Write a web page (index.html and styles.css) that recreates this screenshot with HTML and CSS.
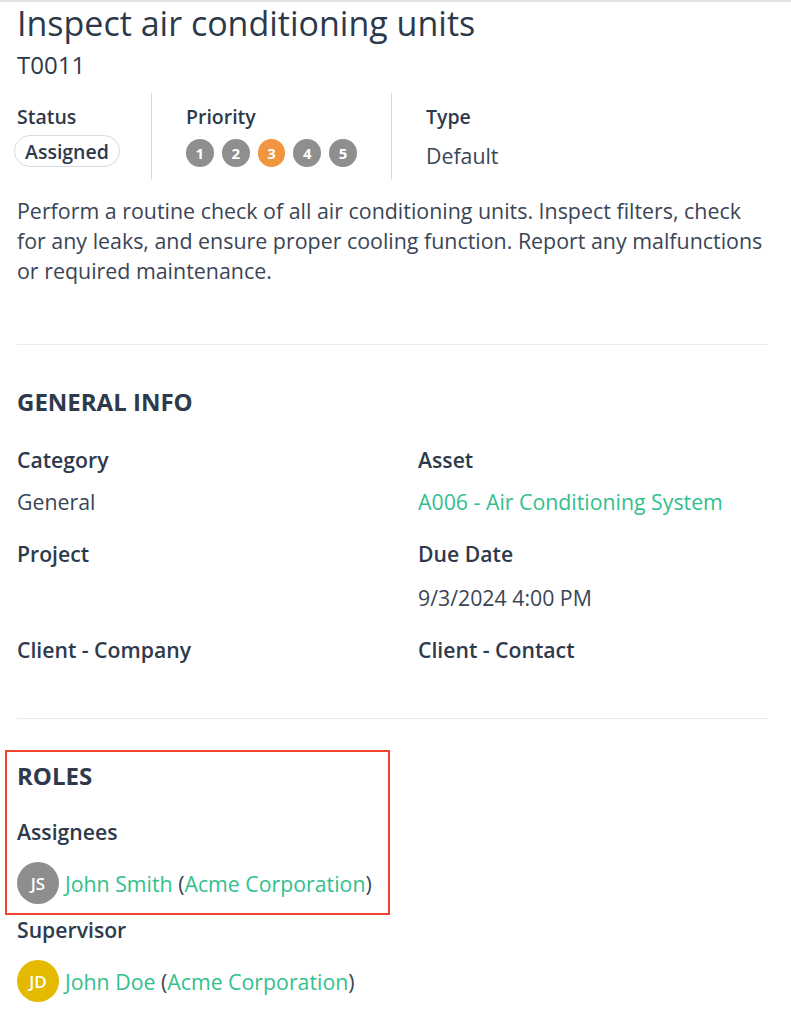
FILE: index.html
```html
<!DOCTYPE html>
<html lang="en">
<head>
<meta charset="utf-8">
<title>Inspect air conditioning units</title>
<link rel="stylesheet" href="styles.css">
</head>
<body>
<div class="page">
  <h1 class="title">Inspect air conditioning units</h1>
  <div class="code">T0011</div>

  <div class="meta">
    <div class="meta-col col-status">
      <div class="meta-label">Status</div>
      <div class="meta-value"><span class="pill">Assigned</span></div>
    </div>
    <div class="meta-col col-priority">
      <div class="meta-label">Priority</div>
      <div class="meta-value priorities">
        <span class="prio">1</span>
        <span class="prio">2</span>
        <span class="prio active">3</span>
        <span class="prio">4</span>
        <span class="prio">5</span>
      </div>
    </div>
    <div class="meta-col col-type">
      <div class="meta-label">Type</div>
      <div class="meta-value text">Default</div>
    </div>
  </div>

  <p class="desc">Perform a routine check of all air conditioning units. Inspect filters, check for any leaks, and ensure proper cooling function. Report any malfunctions or required maintenance.</p>

  <hr class="sep sep-first">

  <h2 class="heading">GENERAL INFO</h2>
  <div class="info-grid">
    <div class="field">
      <div class="label">Category</div>
      <div class="value">General</div>
    </div>
    <div class="field">
      <div class="label">Asset</div>
      <div class="value"><a class="link" href="#">A006 - Air Conditioning System</a></div>
    </div>
    <div class="field">
      <div class="label">Project</div>
      <div class="value"></div>
    </div>
    <div class="field">
      <div class="label">Due Date</div>
      <div class="value date">9/3/2024 4:00 PM</div>
    </div>
    <div class="field">
      <div class="label">Client - Company</div>
      <div class="value"></div>
    </div>
    <div class="field">
      <div class="label">Client - Contact</div>
      <div class="value"></div>
    </div>
  </div>

  <hr class="sep sep-second">

  <div class="highlight">
    <h2 class="heading">ROLES</h2>
    <div class="label role-label">Assignees</div>
    <div class="person">
      <span class="avatar gray">JS</span>
      <span class="person-text"><a class="link" href="#">John Smith</a> (<a class="link" href="#">Acme Corporation</a>)</span>
    </div>
  </div>
  <div class="label sup-label">Supervisor</div>
  <div class="person person-sup">
    <span class="avatar gold">JD</span>
    <span class="person-text"><a class="link" href="#">John Doe</a> (<a class="link" href="#">Acme Corporation</a>)</span>
  </div>
</div>
</body>
</html>
```
FILE: styles.css
```css
html, body {
  margin: 0;
  padding: 0;
  background: #ffffff;
}
body {
  font-family: "Open Sans", "Noto Sans", "Liberation Sans", sans-serif;
  color: #2e3a4b;
  border-top: 2px solid #e3e3e3;
  overflow: hidden;
}
.page {
  padding: 0 23px 0 17px;
}
.title {
  margin: 0;
  font-size: 34px;
  line-height: 42px;
  font-weight: 500;
  color: #2c394a;
}
.code {
  font-size: 24px;
  line-height: 41px;
  color: #2c394a;
}
.meta {
  display: flex;
  margin-top: 8px;
}
.meta-col {
  padding: 11px 34px 13px 34px;
  border-left: 1px solid #dadada;
}
.col-status {
  width: 134px;
  box-sizing: border-box;
  padding-left: 0;
  border-left: 0;
}
.col-priority {
  width: 240px;
  box-sizing: border-box;
}
.meta-label {
  font-size: 19.5px;
  line-height: 26px;
  font-weight: 600;
  color: #2e3a4b;
}
.meta-value {
  margin-top: 5px;
  height: 32px;
  display: flex;
  align-items: center;
}
.meta-value.text {
  font-size: 21.3px;
  color: #3a4556;
  padding-top: 8px;
  box-sizing: border-box;
}
.pill {
  margin-left: -3px;
  height: 32px;
  box-sizing: border-box;
  display: inline-flex;
  align-items: center;
  padding: 0 10px;
  border: 1px solid #d5dbe2;
  border-radius: 16px;
  font-size: 19.5px;
  font-weight: 600;
  color: #2e3a4b;
}
.priorities {
  gap: 8px;
  padding-top: 4px;
  box-sizing: border-box;
}
.prio {
  width: 28px;
  height: 28px;
  border-radius: 50%;
  background: #8f8f8f;
  color: #ffffff;
  font-size: 15px;
  font-weight: 700;
  display: flex;
  align-items: center;
  justify-content: center;
}
.prio.active {
  background: #f09540;
}
.desc {
  margin: 16px 0 0 0;
  font-size: 21.4px;
  line-height: 30px;
  color: #3a4556;
}
.sep {
  border: 0;
  border-top: 1px solid #ececec;
  margin: 0;
}
.sep-first {
  margin-top: 58px;
}
.heading {
  margin: 41px 0 0 0;
  font-size: 24px;
  line-height: 32px;
  font-weight: 700;
  color: #2e3a4b;
}
.info-grid {
  display: grid;
  grid-template-columns: 401px 1fr;
  row-gap: 26px;
  margin-top: 29px;
}
.label {
  font-size: 21.2px;
  line-height: 26px;
  font-weight: 600;
  color: #2e3a4b;
}
.value {
  margin-top: 16px;
  min-height: 26px;
  font-size: 21.3px;
  line-height: 26px;
  color: #3a4556;
}
.value.date {
  margin-top: 18px;
}
.link {
  color: #33bf8c;
  text-decoration: none;
}
.sep-second {
  margin-top: 13px;
}
.highlight {
  margin: 31px 0 0 -12px;
  width: 385px;
  box-sizing: border-box;
  border: 2px solid #f0452c;
  padding: 8px 0 9px 10px;
}
.highlight .heading {
  margin-top: 0;
}
.role-label {
  margin-top: 27px;
}
.person {
  margin-top: 17px;
  display: flex;
  align-items: center;
  gap: 6px;
  height: 42px;
}
.person-sup {
  margin-top: 17px;
}
.avatar {
  width: 42px;
  height: 42px;
  border-radius: 50%;
  color: #ffffff;
  font-size: 17px;
  font-weight: 600;
  display: flex;
  align-items: center;
  justify-content: center;
  flex: none;
}
.avatar.gray {
  background: #8e8e8e;
}
.avatar.gold {
  background: #e3b902;
}
.person-text {
  font-size: 21.3px;
  color: #3a4556;
}
.sup-label {
  margin-top: 2px;
}
```
